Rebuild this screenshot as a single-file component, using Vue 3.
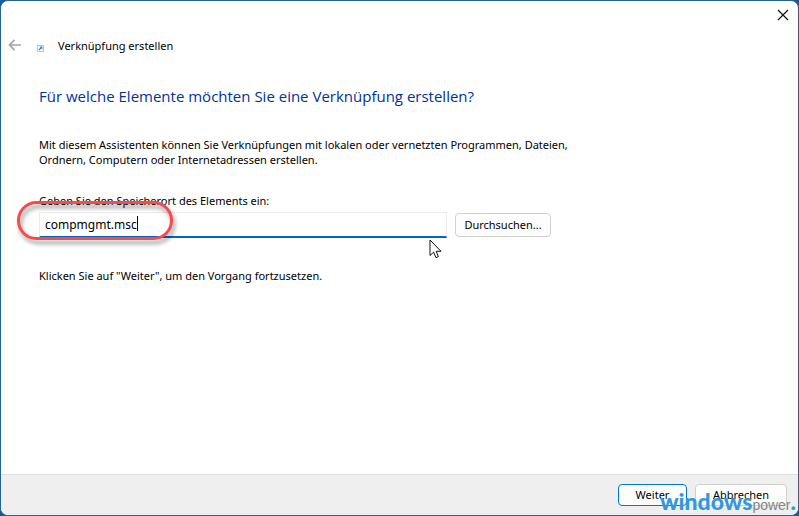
<template>
  <div class="desktop">
    <main class="wizard">
      <div class="title-bar">
        <button class="close-button" type="button" aria-label="Schließen">
          <svg width="12" height="12" viewBox="0 0 12 12">
            <path d="M1 1 L11 11 M11 1 L1 11" fill="none" stroke="#111" stroke-width="1.2" />
          </svg>
        </button>
      </div>

      <header class="wizard-header">
        <button class="back-button" type="button" aria-label="Zurück" disabled>
          <svg width="14" height="12" viewBox="0 0 14 12">
            <path d="M6.5 0.8 L1.5 6 L6.5 11.2 M1.5 6 H13" fill="none" stroke="#a5a5a5" stroke-width="1.7" />
          </svg>
        </button>
        <svg class="shortcut-icon" width="7" height="7" viewBox="0 0 7 7">
          <rect x="0.5" y="0.5" width="6" height="6" fill="#f8fbfd" stroke="#c3c7cb" />
          <path d="M2 5 L4.6 2.4" stroke="#2386cf" stroke-width="1.2" />
          <path d="M2.4 1.6 H5.4 V4.6 Z" fill="#2386cf" />
        </svg>
        <span>Verknüpfung erstellen</span>
      </header>

      <section class="wizard-body">
        <h1>Für welche Elemente möchten Sie eine Verknüpfung erstellen?</h1>
        <p class="intro">
          Mit diesem Assistenten können Sie Verknüpfungen mit lokalen oder vernetzten Programmen, Dateien,<br />
          Ordnern, Computern oder Internetadressen erstellen.
        </p>
        <label for="location">Geben Sie den Speicherort des Elements ein:</label>
        <div class="location-row">
          <div class="field">
            <input id="location" v-model="location" type="text" spellcheck="false" />
            <span class="caret"></span>
            <svg class="marker" width="166" height="52" viewBox="0 0 166 52">
              <rect x="4.5" y="4.5" width="153" height="36" rx="18" fill="none" stroke="#f64a4c" stroke-width="3" />
            </svg>
            <svg class="pointer" width="13" height="20" viewBox="0 0 13 20">
              <path
                d="M1 1 V16.5 L4.6 13.2 L7 18.7 L9.4 17.6 L7.2 12.3 H12 Z"
                fill="#fff"
                stroke="#111"
                stroke-width="1"
              />
            </svg>
          </div>
          <button class="button browse" type="button">Durchsuchen...</button>
        </div>
        <p class="hint">Klicken Sie auf "Weiter", um den Vorgang fortzusetzen.</p>
      </section>

      <footer class="wizard-footer">
        <button class="button next" type="button">Weiter</button>
        <button class="button cancel" type="button">Abbrechen</button>
        <div class="watermark">
          <span class="brand">windows</span><span class="suffix">power</span><span class="dot">.</span>
        </div>
      </footer>
    </main>
  </div>
</template>

<script setup>
import { ref } from "vue";

const location = ref("compmgmt.msc");
</script>

<style>
body {
  background: #0f5a9c;
}
</style>

<style scoped>
.desktop,
.desktop * {
  box-sizing: border-box;
}

.desktop {
  min-height: 100vh;
  display: flex;
  background: #0f5a9c;
  color: #000;
  font-family: "Noto Sans", "Open Sans", sans-serif;
  font-size: 11px;
  line-height: 15px;
}

.wizard {
  flex: 1;
  display: flex;
  flex-direction: column;
  border: 1px solid #2b6294;
  border-radius: 8px;
  background: #fff;
  overflow: hidden;
}

button,
input {
  font: inherit;
  color: inherit;
}

.title-bar {
  display: flex;
  justify-content: flex-end;
  height: 28px;
}

.close-button,
.back-button {
  display: flex;
  align-items: center;
  justify-content: center;
  padding: 0;
  border: none;
  background: transparent;
}

.close-button {
  width: 30px;
}

.wizard-header {
  display: flex;
  align-items: center;
  height: 32px;
  padding-left: 7px;
}

.shortcut-icon {
  margin: 6px 14px 0 15px;
}

.wizard-body {
  flex: 1;
  padding: 24px 38px;
}

h1 {
  margin: 0 0 30px;
  color: #003399;
  font-family: "Open Sans", "Noto Sans", sans-serif;
  font-size: 15px;
  font-weight: 400;
  line-height: 22px;
}

p {
  margin: 0;
}

.intro {
  margin-bottom: 26px;
}

label {
  display: block;
  margin-bottom: 4px;
}

.location-row {
  display: flex;
  align-items: center;
  gap: 8px;
}

.field {
  position: relative;
  width: 408px;
}

input {
  display: block;
  width: 100%;
  height: 26px;
  padding: 0 5px;
  border: 1px solid #ececec;
  border-bottom: 2px solid #0067c0;
  outline: none;
  background: #fff;
  font-size: 12px;
}

.caret {
  position: absolute;
  top: 4px;
  left: 98px;
  width: 1px;
  height: 15px;
  background: #000;
}

.marker {
  position: absolute;
  top: -14px;
  left: -25px;
  filter: drop-shadow(2px 4px 2px rgba(0, 0, 0, 0.4));
}

.pointer {
  position: absolute;
  top: 27px;
  left: 390px;
}

.button {
  height: 22px;
  padding: 0 0 2px;
  border: 1px solid #d0d0d0;
  border-radius: 4px;
  background: #fdfdfd;
}

.browse {
  width: 96px;
  height: 24px;
}

.hint {
  margin-top: 30px;
}

.wizard-footer {
  position: relative;
  display: flex;
  justify-content: flex-end;
  gap: 8px;
  height: 41px;
  padding: 9px 11px;
  border-top: 1px solid #dfdfdf;
  background: #efefef;
}

.next {
  width: 69px;
  border-color: #0078d4;
}

.cancel {
  width: 92px;
}

.watermark {
  position: absolute;
  right: 2px;
  bottom: -4px;
  display: flex;
  align-items: baseline;
  font-family: Lato, sans-serif;
  line-height: 28px;
  pointer-events: none;
}

.brand {
  color: #3498db;
  font-size: 23px;
  font-weight: 900;
}

.suffix {
  color: #858585;
  font-family: "Liberation Sans", sans-serif;
  font-size: 14px;
}

.dot {
  color: #3498db;
  font-size: 23px;
  font-weight: 900;
}
</style>
